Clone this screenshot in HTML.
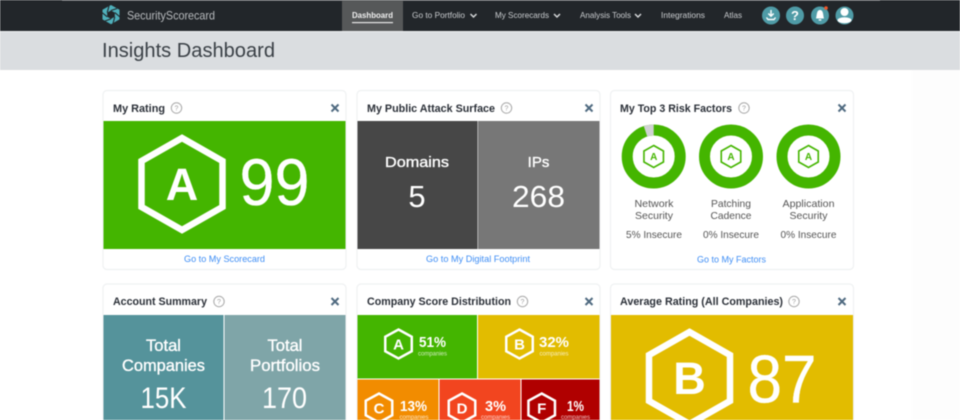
<!DOCTYPE html>
<html><head><meta charset="utf-8"><style>
html,body{margin:0;padding:0;background:#fff;width:960px;height:420px;overflow:hidden}
svg{display:block;filter:blur(.4px)}
text{font-family:"Liberation Sans",sans-serif}
.t{font-size:11px;font-weight:700;fill:#2b3038}
.q{fill:none;stroke:#a8a8a8;stroke-width:1}
.qt{font-size:7px;fill:#a0a0a0;text-anchor:middle}
.x{stroke:#4f6a80;stroke-width:2;fill:none}
.l{font-size:9px;fill:#3f8ef5}
.n{font-size:8.5px;fill:#c9cccf}
.c{fill:#fff;stroke:#eff1f2;stroke-width:1.2}
.w{fill:#fff}
.b{stroke:#fff;stroke-width:.35}
.m{text-anchor:middle}
.h{fill:none;stroke:#fff}
.sm{font-size:6px;fill:#fff;opacity:.75;text-anchor:middle}
.pc{font-size:14.5px;font-weight:700;fill:#fff}
.g{font-size:10.5px;fill:#555;text-anchor:middle}
.chev{fill:none;stroke:#d5d7d9;stroke-width:1.5}
</style></head><body>
<svg width="960" height="420" viewBox="0 0 960 420" xmlns="http://www.w3.org/2000/svg">
<rect width="960" height="420" fill="#fff"/>
<rect x="912" y="70" width="48" height="350" fill="#fdfdfd"/>
<!-- nav -->
<rect width="960" height="31" fill="#22262a"/>
<rect x="62" y="0" width="818" height="1" fill="#55585b"/>
<rect y="31" width="960" height="1.5" fill="#eef0f1"/>
<rect x="342" y="0" width="61" height="31" fill="#565859"/>
<!-- logo -->
<polygon points="111,5 119.500,9.800 119.500,19.400 111,24.200 102.500,19.400 102.500,9.800" fill="#4fb0bb"/>
<polygon points="111,10.500 114.800,12.600 114.800,16.800 111,18.900 107.200,16.800 107.200,12.600" fill="#22262a"/>
<g fill="none" stroke="#22262a" stroke-width="1.100">
<path d="M111 10.500 L117 8.500 M114.800 12.600 L120 17 M114.800 16.800 L113 23.500 M111 18.900 L105 21 M107.200 16.800 L102 12.500 M107.200 12.600 L109 6"/>
</g>
<text x="127" y="19.500" font-size="12" fill="#b8bbbe" textLength="88" lengthAdjust="spacingAndGlyphs">SecurityScorecard</text>
<text x="352" y="18" font-size="8.500" font-weight="700" fill="#f0f0f0" textLength="41" lengthAdjust="spacingAndGlyphs">Dashboard</text>
<rect x="352" y="22" width="41" height="1.200" fill="#e8e8e8"/>
<text class="n" x="412" y="18" textLength="53" lengthAdjust="spacingAndGlyphs">Go to Portfolio</text>
<path class="chev" d="M470.500 14 L473.500 17 L476.500 14"/>
<text class="n" x="495" y="18" textLength="54" lengthAdjust="spacingAndGlyphs">My Scorecards</text>
<path class="chev" d="M554 14 L557 17 L560 14"/>
<text class="n" x="580" y="18" textLength="51" lengthAdjust="spacingAndGlyphs">Analysis Tools</text>
<path class="chev" d="M635 14 L638 17 L641 14"/>
<text class="n" x="661" y="18" textLength="44" lengthAdjust="spacingAndGlyphs">Integrations</text>
<text class="n" x="724" y="18" textLength="18" lengthAdjust="spacingAndGlyphs">Atlas</text>
<circle cx="771" cy="15.500" r="9" fill="#4f9ba6"/>
<path d="M771 10 V16 M768.300 13.500 L771 16.200 L773.700 13.500 M766.500 17.500 L768 19.500 H774 L775.500 17.500" fill="none" stroke="#fff" stroke-width="1.400"/>
<circle cx="795" cy="15.500" r="9" fill="#4f9ba6"/>
<text x="795" y="20" font-size="13" font-weight="700" fill="#fff" class="m">?</text>
<circle cx="820" cy="15.500" r="9" fill="#4f9ba6"/>
<path d="M816 18.500 C817 15 816.500 10 820 10 C823.500 10 823 15 824 18.500 Z M818.700 19.300 H821.300 V20.600 H818.700 Z" fill="#fff"/>
<circle cx="826" cy="8" r="1.800" fill="#f0562a"/>
<circle cx="844.500" cy="15.500" r="9" fill="#4f9ba6"/>
<circle cx="844.500" cy="12" r="4" fill="#fff"/>
<ellipse cx="844.500" cy="20.300" rx="7" ry="3" fill="#fff"/>
<!-- header band -->
<rect y="32" width="960" height="38" fill="#dadde0"/>
<text x="102" y="57" font-size="20" fill="#3a4046" textLength="173" lengthAdjust="spacingAndGlyphs">Insights Dashboard</text>
<!-- cards -->
<rect class="c" x="103" y="90.500" width="243" height="179" rx="4"/>
<rect class="c" x="357" y="90.500" width="243" height="179" rx="4"/>
<rect class="c" x="610.500" y="90.500" width="243" height="179" rx="4"/>
<rect class="c" x="103" y="284" width="243" height="150" rx="4"/>
<rect class="c" x="357" y="284" width="243" height="150" rx="4"/>
<rect class="c" x="610.500" y="284" width="243" height="150" rx="4"/>
<!-- titles -->
<text class="t" x="113" y="112" textLength="52" lengthAdjust="spacingAndGlyphs">My Rating</text>
<circle class="q" cx="176.500" cy="108" r="5.200"/><text class="qt" x="176.500" y="110.500">?</text>
<path class="x" d="M331.500 104.500 L338.500 111.500 M338.500 104.500 L331.500 111.500"/>
<text class="t" x="367" y="112" textLength="128" lengthAdjust="spacingAndGlyphs">My Public Attack Surface</text>
<circle class="q" cx="506.500" cy="108" r="5.200"/><text class="qt" x="506.500" y="110.500">?</text>
<path class="x" d="M585.500 104.500 L592.500 111.500 M592.500 104.500 L585.500 111.500"/>
<text class="t" x="620" y="112" textLength="112" lengthAdjust="spacingAndGlyphs">My Top 3 Risk Factors</text>
<circle class="q" cx="744" cy="108" r="5.200"/><text class="qt" x="744" y="110.500">?</text>
<path class="x" d="M838.500 104.500 L845.500 111.500 M845.500 104.500 L838.500 111.500"/>
<text class="t" x="113" y="305" textLength="94" lengthAdjust="spacingAndGlyphs">Account Summary</text>
<circle class="q" cx="219" cy="301.500" r="5.200"/><text class="qt" x="219" y="304">?</text>
<path class="x" d="M331.500 298 L338.500 305 M338.500 298 L331.500 305"/>
<text class="t" x="367" y="305" textLength="144" lengthAdjust="spacingAndGlyphs">Company Score Distribution</text>
<circle class="q" cx="522.500" cy="301.500" r="5.200"/><text class="qt" x="522.500" y="304">?</text>
<path class="x" d="M585.500 298 L592.500 305 M592.500 298 L585.500 305"/>
<text class="t" x="620" y="305" textLength="163" lengthAdjust="spacingAndGlyphs">Average Rating (All Companies)</text>
<circle class="q" cx="794" cy="301.500" r="5.200"/><text class="qt" x="794" y="304">?</text>
<path class="x" d="M838.500 298 L845.500 305 M845.500 298 L838.500 305"/>
<!-- My rating -->
<rect x="103.500" y="121" width="242" height="128" fill="#44b500"/>
<polygon class="h" stroke-width="6.500" points="182,138 222.500,161 222.500,207 182,230 141.500,207 141.500,161"/>
<text class="w m" x="182" y="200" font-size="45" font-weight="700">A</text>
<text class="w b" x="239.500" y="205" font-size="66" textLength="70" lengthAdjust="spacingAndGlyphs">99</text>
<text class="l" x="184" y="262" textLength="81" lengthAdjust="spacingAndGlyphs">Go to My Scorecard</text>
<!-- Attack surface -->
<rect x="357.500" y="121" width="120" height="128" fill="#474747"/>
<rect x="478" y="121" width="121.500" height="128" fill="#777"/>
<text class="w b m" x="417" y="167" font-size="15" textLength="64" lengthAdjust="spacingAndGlyphs">Domains</text>
<text class="w m" x="417" y="207" font-size="31">5</text>
<text class="w b m" x="538.500" y="167" font-size="15">IPs</text>
<text class="w m" x="538.500" y="207" font-size="31" textLength="53" lengthAdjust="spacingAndGlyphs">268</text>
<text class="l" x="426" y="262" textLength="104" lengthAdjust="spacingAndGlyphs">Go to My Digital Footprint</text>
<!-- Risk factors -->
<g fill="none" stroke="#44b500" stroke-width="11">
<circle cx="653.700" cy="156.500" r="26.500"/>
<circle cx="731" cy="156.500" r="26.500"/>
<circle cx="808.500" cy="156.500" r="26.500"/>
</g>
<path d="M653.700 130 A26.500 26.500 0 0 0 645.500 131.300" fill="none" stroke="#d0d2d2" stroke-width="11"/>
<g fill="none" stroke="#44b500" stroke-width="1.600">
<polygon points="653.700,145.500 663.450,151 663.450,162 653.700,167.500 643.950,162 643.950,151"/>
<polygon points="731,145.500 740.750,151 740.750,162 731,167.500 721.250,162 721.250,151"/>
<polygon points="808.500,145.500 818.250,151 818.250,162 808.500,167.500 798.750,162 798.750,151"/>
</g>
<g font-size="10" font-weight="700" fill="#44b500" text-anchor="middle">
<text x="653.700" y="160">A</text><text x="731" y="160">A</text><text x="808.500" y="160">A</text>
</g>
<text class="g" x="654" y="207" textLength="39" lengthAdjust="spacingAndGlyphs">Network</text>
<text class="g" x="654" y="219" textLength="38" lengthAdjust="spacingAndGlyphs">Security</text>
<text class="g" x="731" y="207" textLength="40" lengthAdjust="spacingAndGlyphs">Patching</text>
<text class="g" x="731" y="219" textLength="41" lengthAdjust="spacingAndGlyphs">Cadence</text>
<text class="g" x="808.500" y="207" textLength="52" lengthAdjust="spacingAndGlyphs">Application</text>
<text class="g" x="808.500" y="219" textLength="38" lengthAdjust="spacingAndGlyphs">Security</text>
<text class="g" x="654" y="238" textLength="56" lengthAdjust="spacingAndGlyphs">5% Insecure</text>
<text class="g" x="731" y="238" textLength="56" lengthAdjust="spacingAndGlyphs">0% Insecure</text>
<text class="g" x="808.500" y="238" textLength="56" lengthAdjust="spacingAndGlyphs">0% Insecure</text>
<text class="l" x="697" y="262.500" textLength="69" lengthAdjust="spacingAndGlyphs">Go to My Factors</text>
<!-- Account summary -->
<rect x="103.500" y="315" width="120" height="105" fill="#55939b"/>
<rect x="224.500" y="315" width="121" height="105" fill="#7fa5a8"/>
<g font-size="17">
<text class="w b m" x="163.500" y="351" textLength="35" lengthAdjust="spacingAndGlyphs">Total</text>
<text class="w b m" x="163.500" y="371" textLength="83" lengthAdjust="spacingAndGlyphs">Companies</text>
<text class="w b m" x="285" y="351" textLength="35" lengthAdjust="spacingAndGlyphs">Total</text>
<text class="w b m" x="285" y="371" textLength="70" lengthAdjust="spacingAndGlyphs">Portfolios</text>
</g>
<text class="w m" x="163.500" y="408" font-size="30" textLength="46" lengthAdjust="spacingAndGlyphs">15K</text>
<text class="w m" x="284.500" y="408" font-size="30" textLength="45" lengthAdjust="spacingAndGlyphs">170</text>
<!-- Distribution -->
<rect x="357.500" y="315" width="119.500" height="63.500" fill="#44b500"/>
<rect x="478" y="315" width="121.500" height="63.500" fill="#e2bc00"/>
<rect x="357.500" y="379.500" width="81" height="41" fill="#f28c00"/>
<rect x="439.500" y="379.500" width="81" height="41" fill="#f2451f"/>
<rect x="521.500" y="379.500" width="78" height="41" fill="#b00000"/>
<g stroke-width="2.500">
<polygon class="h" points="398.500,329.500 411.750,336.750 411.750,351.250 398.500,358.500 385.250,351.250 385.250,336.750"/>
<polygon class="h" points="519.500,329.500 532.750,336.750 532.750,351.250 519.500,358.500 506.250,351.250 506.250,336.750"/>
<polygon class="h" points="379,393.500 392.250,400.750 392.250,415.250 379,422.500 365.750,415.250 365.750,400.750"/>
<polygon class="h" points="462,393.500 475.250,400.750 475.250,415.250 462,422.500 448.750,415.250 448.750,400.750"/>
<polygon class="h" points="541.700,393.500 554.950,400.750 554.950,415.250 541.700,422.500 528.450,415.250 528.450,400.750"/>
</g>
<g font-size="15" font-weight="700">
<text class="w m" x="398.500" y="349.500">A</text>
<text class="w m" x="519.500" y="349.500">B</text>
<text class="w m" x="379" y="413.500">C</text>
<text class="w m" x="462" y="413.500">D</text>
<text class="w m" x="541.700" y="413.500">F</text>
</g>
<text class="pc" x="419" y="347" textLength="27" lengthAdjust="spacingAndGlyphs">51%</text>
<text class="sm" x="432.500" y="355.500">companies</text>
<text class="pc" x="539" y="347" textLength="30" lengthAdjust="spacingAndGlyphs">32%</text>
<text class="sm" x="554" y="355.500">companies</text>
<text class="pc" x="400" y="411" textLength="27" lengthAdjust="spacingAndGlyphs">13%</text>
<text class="sm" x="414" y="419">companies</text>
<text class="pc" x="485" y="411" textLength="21" lengthAdjust="spacingAndGlyphs">3%</text>
<text class="sm" x="495.500" y="419">companies</text>
<text class="pc" x="567" y="411" textLength="17" lengthAdjust="spacingAndGlyphs">1%</text>
<text class="sm" x="575.500" y="419">companies</text>
<!-- Average -->
<rect x="611" y="315" width="242" height="105" fill="#e2bc00"/>
<polygon class="h" stroke-width="6.500" points="689.500,332 730,355 730,401 689.500,424 649,401 649,355"/>
<text class="w m" x="689.500" y="394" font-size="45" font-weight="700">B</text>
<text class="w b" x="747.500" y="402.500" font-size="68" textLength="69" lengthAdjust="spacingAndGlyphs">87</text>
</svg>
</body></html>
